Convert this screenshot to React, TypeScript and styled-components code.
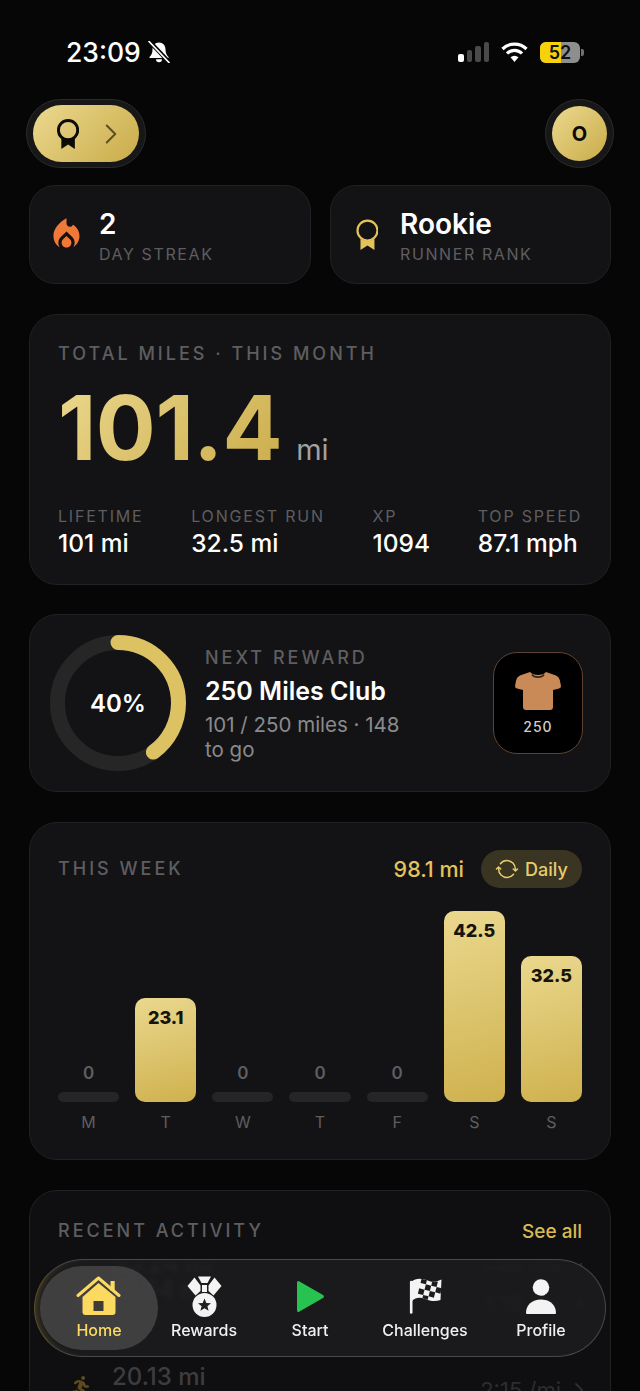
import { ReactNode } from 'react';
import styled, { createGlobalStyle } from 'styled-components';
import { FaRunning } from 'react-icons/fa';
import { IoSync } from 'react-icons/io5';
import { MdLocalFireDepartment } from 'react-icons/md';
import { LuChevronRight } from 'react-icons/lu';

const GOLD = 'linear-gradient(135deg, #ecd98f 0%, #c9ab49 100%)';
const BAR_GOLD = 'linear-gradient(165deg, #ead88e 0%, #cfb14e 100%)';

const week = [
  { day: 'M', miles: 0 },
  { day: 'T', miles: 23.1 },
  { day: 'W', miles: 0 },
  { day: 'T', miles: 0 },
  { day: 'F', miles: 0 },
  { day: 'S', miles: 42.5 },
  { day: 'S', miles: 32.5 },
];

const totals = [
  { label: 'LIFETIME', value: '101 mi' },
  { label: 'LONGEST RUN', value: '32.5 mi' },
  { label: 'XP', value: '1094' },
  { label: 'TOP SPEED', value: '87.1 mph' },
];

const activities = [
  { distance: '35.24 mi', pace: '1:48 /mi', top: true },
  { distance: '18.54 mi', pace: '1:15 /mi' },
  { distance: '20.13 mi', pace: '2:15 /mi' },
];

const Ribbon = ({ size, color, weight }: { size: number; color: string; weight: number }) => (
  <svg width={size * 0.74} height={size} viewBox="0 0 23 31">
    <path d="M4.500 20 Q11.500 24 18.500 20 V31 L11.500 26.500 L4.500 31 Z" fill={color} />
    <circle cx="11.500" cy="11.500" r="10" fill="none" stroke={color} strokeWidth={weight} />
  </svg>
);

const BellOff = () => (
  <svg width="22" height="22" viewBox="0 0 22 22">
    <path
      d="M11 1.500 C7 1.500 4.500 4.500 4.500 8.500 C4.500 12 3.500 14 1.500 16 V17 H20.500 V16 C18.500 14 17.500 12 17.500 8.500 C17.500 4.500 15 1.500 11 1.500 Z"
      fill="#fff"
    />
    <path d="M8 18.300 a3 3 0 0 0 6 0 Z" fill="#fff" />
    <path d="M1.500 0.500 L21 21" stroke="#060607" strokeWidth="4.200" />
    <path d="M1 0.500 L21 21.500" stroke="#fff" strokeWidth="1.700" strokeLinecap="round" />
  </svg>
);

const HomeIcon = () => (
  <svg width="46" height="40" viewBox="0 0 46 40">
    <path d="M34.500 5 h4.200 v10 h-4.200 Z" fill="#fcd961" />
    <path
      d="M6.500 21 L22.500 7 L39.500 21 V36 a3 3 0 0 1 -3 3 H9.500 a3 3 0 0 1 -3 -3 Z"
      fill="#fcd961"
    />
    <path d="M17.500 25 V35 H27.500 V25 Z" fill="#3f3d33" />
    <path
      d="M2 19.500 L22.500 2 L43 19.500"
      fill="none"
      stroke="#fcd961"
      strokeWidth="3"
      strokeLinecap="round"
      strokeLinejoin="round"
    />
  </svg>
);

const MedalIcon = () => (
  <svg width="35" height="41" viewBox="0 0 35 41">
    <path d="M11 0.500 H24 L20.500 7 H14.500 Z" fill="#f3f3f3" />
    <path d="M7.500 1.500 L0.500 10 L8.500 19.500 L13.500 15 L13.500 9.500 Z" fill="#f3f3f3" />
    <path d="M27.500 1.500 L34.500 10 L26.500 19.500 L21.500 15 L21.500 9.500 Z" fill="#f3f3f3" />
    <path d="M15 9 H20 V16 H15 Z" fill="#f3f3f3" />
    <circle cx="17.500" cy="29" r="12" fill="#f3f3f3" />
    <path
      d="M17.500 22.500 L19.300 26.900 L24 27.200 L20.400 30.200 L21.600 34.800 L17.500 32.300 L13.400 34.800 L14.600 30.200 L11 27.200 L15.700 26.900 Z"
      fill="#1f1f21"
    />
  </svg>
);

const PlayIcon = () => (
  <svg width="30" height="33" viewBox="0 0 30 33">
    <path d="M2 3 Q2 0 4.500 1.500 L28 15 Q30 16.500 28 18 L4.500 31.500 Q2 33 2 30 Z" fill="#27c24f" />
  </svg>
);

const FlagIcon = () => (
  <svg width="33" height="36" viewBox="0 0 33 36">
    <defs>
      <clipPath id="flagCloth">
        <path d="M2 4 C8 -1 14 1 20 3 C25 5 29 3 32.500 1.500 L31.500 22 C26 24 21 23 16 21 C11 19 7 19 3 23 Z" />
      </clipPath>
    </defs>
    <path d="M2 4 C8 -1 14 1 20 3 C25 5 29 3 32.500 1.500 L31.500 22 C26 24 21 23 16 21 C11 19 7 19 3 23 Z" fill="#f3f3f3" />
    <g clipPath="url(#flagCloth)">
      <g transform="rotate(14 17 12)" fill="#1c1c1e">
        <rect x="10" y="1" width="5.500" height="5.500" />
        <rect x="21" y="1" width="5.500" height="5.500" />
        <rect x="15.500" y="6.500" width="5.500" height="5.500" />
        <rect x="26.500" y="6.500" width="5.500" height="5.500" />
        <rect x="10" y="12" width="5.500" height="5.500" />
        <rect x="21" y="12" width="5.500" height="5.500" />
        <rect x="15.500" y="17.500" width="5.500" height="5.500" />
      </g>
    </g>
    <path d="M2.200 4 V34.500" stroke="#f3f3f3" strokeWidth="2.600" strokeLinecap="round" />
  </svg>
);

const ProfileIcon = () => (
  <svg width="32" height="36" viewBox="0 0 32 36">
    <circle cx="16" cy="9.500" r="8.300" fill="#f3f3f3" />
    <path d="M1 35 C1 27 7 21.500 16 21.500 C25 21.500 31 27 31 35 Q31 36 30 36 H2 Q1 36 1 35 Z" fill="#f3f3f3" />
  </svg>
);

const ShirtIcon = () => (
  <svg width="46" height="38" viewBox="0 0 46 38">
    <path
      d="M15 0 C18 4 28 4 31 0 L41 3.500 Q44 4.500 44.800 8 L46 14 Q46 16 44 16.500 L38 18 V35 Q38 38 35 38 H11 Q8 38 8 35 V18 L2 16.500 Q0 16 0 14 L1.200 8 Q2 4.500 5 3.500 Z"
      fill="#c98a58"
    />
    <path d="M17 2.500 C19 6 27 6 29 2.500" fill="none" stroke="#3a2415" strokeWidth="1.600" />
  </svg>
);

const WifiIcon = () => (
  <svg width="27" height="20" viewBox="0 0 27 20">
    <path d="M1.500 7 A17 17 0 0 1 25.500 7" fill="none" stroke="#fff" strokeWidth="3.200" />
    <path d="M6 11.500 A10.500 10.500 0 0 1 21 11.500" fill="none" stroke="#fff" strokeWidth="3.200" />
    <path d="M13.500 20 L9.500 15.200 A6 6 0 0 1 17.500 15.200 Z" fill="#fff" />
  </svg>
);

const ProgressRing = () => (
  <RingBox>
    <svg width="136" height="136" viewBox="0 0 136 136">
      <circle cx="68" cy="68" r="60.500" fill="none" stroke="#262627" strokeWidth="15" />
      <circle
        cx="68"
        cy="68"
        r="60.500"
        fill="none"
        stroke="#dcc263"
        strokeWidth="15"
        strokeLinecap="round"
        strokeDasharray={`${2 * Math.PI * 60.5 * 0.4} ${2 * Math.PI * 60.5}`}
        transform="rotate(-90 68 68)"
      />
    </svg>
    <RingValue>40%</RingValue>
  </RingBox>
);

const NavEntry = ({ icon, label, active }: { icon: ReactNode; label: string; active?: boolean }) => (
  <NavItem $active={active}>
    <NavIcon>{icon}</NavIcon>
    <NavLabel $active={active}>{label}</NavLabel>
  </NavItem>
);

export default function App() {
  return (
    <Screen>
      <GlobalStyle />
      <StatusBar>
        <Clock>
          23:09
          <BellOff />
        </Clock>
        <StatusIcons>
          <Signal>
            <SignalBar $h={8} $on />
            <SignalBar $h={12} />
            <SignalBar $h={16} />
            <SignalBar $h={20} />
          </Signal>
          <WifiIcon />
          <Battery>
            <BatteryShell>
              <BatteryFill />
              <BatteryText>52</BatteryText>
            </BatteryShell>
            <BatteryTip />
          </Battery>
        </StatusIcons>
      </StatusBar>

      <Header>
        <RingFrame>
          <RankPill>
            <Ribbon size={30} color="#0b0a05" weight={3} />
            <LuChevronRight size={34} strokeWidth={1.4} color="#5c4f22" />
          </RankPill>
        </RingFrame>
        <RingFrame>
          <Avatar>O</Avatar>
        </RingFrame>
      </Header>

      <Main>
        <StatRow>
          <StatCard>
            <StatIcon>
              <Flame />
            </StatIcon>
            <StatText>
              <StatValue>2</StatValue>
              <StatLabel>DAY STREAK</StatLabel>
            </StatText>
          </StatCard>
          <StatCard>
            <StatIcon>
              <Ribbon size={31} color="#e3c35a" weight={2.2} />
            </StatIcon>
            <StatText>
              <StatValue>Rookie</StatValue>
              <StatLabel>RUNNER RANK</StatLabel>
            </StatText>
          </StatCard>
        </StatRow>

        <TotalCard>
          <SectionTitle>TOTAL MILES · THIS MONTH</SectionTitle>
          <BigLine>
            <BigNumber>101.4</BigNumber>
            <BigUnit>mi</BigUnit>
          </BigLine>
          <TotalsRow>
            {totals.map((item) => (
              <div key={item.label}>
                <TotalLabel>{item.label}</TotalLabel>
                <TotalValue>{item.value}</TotalValue>
              </div>
            ))}
          </TotalsRow>
        </TotalCard>

        <RewardCard>
          <ProgressRing />
          <RewardText>
            <SectionTitle>NEXT REWARD</SectionTitle>
            <RewardName>250 Miles Club</RewardName>
            <RewardSub>101 / 250 miles · 148 to go</RewardSub>
          </RewardText>
          <RewardThumb>
            <ShirtIcon />
            <ThumbLabel>250</ThumbLabel>
          </RewardThumb>
        </RewardCard>

        <WeekCard>
          <WeekHead>
            <SectionTitle>THIS WEEK</SectionTitle>
            <WeekRight>
              <WeekTotal>98.1 mi</WeekTotal>
              <ModePill>
                <IoSync size={24} />
                Daily
              </ModePill>
            </WeekRight>
          </WeekHead>
          <Chart>
            {week.map((item, i) => (
              <ChartColumn key={i}>
                {item.miles === 0 ? (
                  <>
                    <ZeroValue>0</ZeroValue>
                    <EmptyBar />
                  </>
                ) : (
                  <Bar style={{ height: item.miles * 4.5 }}>{item.miles}</Bar>
                )}
                <DayLabel>{item.day}</DayLabel>
              </ChartColumn>
            ))}
          </Chart>
        </WeekCard>

        <RecentCard>
          <RecentHead>
            <SectionTitle>RECENT ACTIVITY</SectionTitle>
            <SeeAll>See all</SeeAll>
          </RecentHead>
          {activities.map((item) => (
            <ActivityRow key={item.distance} $top={item.top}>
              <ActivityIcon>{!item.top && <FaRunning size={21} color="#5f4a1e" />}</ActivityIcon>
              <ActivityDistance $top={item.top}>{item.distance}</ActivityDistance>
              <ActivityPace $top={item.top}>
                {item.pace}
                <PaceChevron size={24} />
              </ActivityPace>
            </ActivityRow>
          ))}
        </RecentCard>
      </Main>

      <BottomNav>
        <NavEntry active icon={<HomeIcon />} label="Home" />
        <NavEntry icon={<MedalIcon />} label="Rewards" />
        <NavEntry icon={<PlayIcon />} label="Start" />
        <NavEntry icon={<FlagIcon />} label="Challenges" />
        <NavEntry icon={<ProfileIcon />} label="Profile" />
      </BottomNav>
    </Screen>
  );
}

const GlobalStyle = createGlobalStyle`
  html, body {
    margin: 0;
    padding: 0;
    background: #060607;
  }
  * {
    box-sizing: border-box;
  }
`;

const Screen = styled.div`
  position: relative;
  width: 640px;
  height: 1391px;
  overflow: hidden;
  padding: 0 29px;
  background: #060607;
  color: #fff;
  font-family: Inter, 'Liberation Sans', sans-serif;
`;

const StatusBar = styled.div`
  height: 99px;
  display: flex;
  justify-content: space-between;
  align-items: flex-start;
  padding: 36px 27px 0 37px;
`;

const Clock = styled.div`
  display: flex;
  align-items: center;
  gap: 7px;
  font-size: 26.500px;
  line-height: 32px;
  font-weight: 500;
`;

const StatusIcons = styled.div`
  display: flex;
  align-items: center;
  gap: 12px;
  height: 32px;
`;

const Signal = styled.div`
  display: flex;
  align-items: flex-end;
  gap: 3px;
  height: 20px;
`;

const SignalBar = styled.div<{ $h: number; $on?: boolean }>`
  width: 5.500px;
  height: ${(p) => p.$h}px;
  border-radius: 2px;
  background: ${(p) => (p.$on ? '#fff' : '#4a4a4b')};
`;

const Battery = styled.div`
  display: flex;
  align-items: center;
  gap: 1px;
`;

const BatteryShell = styled.div`
  position: relative;
  width: 40px;
  height: 21px;
  border-radius: 6px;
  overflow: hidden;
  background: #8e8e8f;
  display: flex;
  align-items: center;
  justify-content: center;
`;

const BatteryFill = styled.div`
  position: absolute;
  left: 0;
  top: 0;
  bottom: 0;
  width: 52%;
  background: #f7d20a;
`;

const BatteryText = styled.span`
  position: relative;
  font-size: 18px;
  font-weight: 600;
  color: #111;
`;

const BatteryTip = styled.div`
  width: 3px;
  height: 7px;
  border-radius: 0 2px 2px 0;
  background: #6f6f70;
`;

const Header = styled.div`
  height: 69px;
  margin: 0 -3px 17px;
  display: flex;
  justify-content: space-between;
`;

const RingFrame = styled.div`
  padding: 6px;
  border-radius: 35px;
  background: #171718;
  border: 1px solid #2b2b2c;
  display: flex;
  align-items: center;
`;

const RankPill = styled.div`
  width: 106px;
  height: 57px;
  border-radius: 29px;
  background: ${GOLD};
  padding-left: 24px;
  display: flex;
  align-items: center;
  gap: 15px;
`;

const Avatar = styled.div`
  width: 55px;
  height: 55px;
  border-radius: 50%;
  background: ${GOLD};
  display: flex;
  align-items: center;
  justify-content: center;
  color: #0b0a05;
  font-size: 20px;
  font-weight: 700;
`;

const Main = styled.div`
  display: flex;
  flex-direction: column;
  gap: 30px;
`;

const StatRow = styled.div`
  display: grid;
  grid-template-columns: 282px 281px;
  justify-content: space-between;
`;

const Card = styled.div`
  background: #131315;
  border: 1px solid #212123;
  border-radius: 28px;
`;

const StatCard = styled(Card)`
  height: 99px;
  padding: 0 21px;
  display: flex;
  align-items: center;
  gap: 18px;
  border-radius: 26px;
`;

const StatIcon = styled.div`
  width: 30px;
  display: flex;
  justify-content: center;
  flex: none;
`;

const Flame = styled(MdLocalFireDepartment).attrs({ size: 39, color: '#f0793a' })`
  flex: none;
`;

const StatText = styled.div`
  display: flex;
  flex-direction: column;
  gap: 2px;
`;

const StatValue = styled.div`
  font-size: 28px;
  line-height: 36px;
  font-weight: 600;
`;

const StatLabel = styled.div`
  font-size: 16px;
  line-height: 20px;
  letter-spacing: 1.600px;
  color: #5e5e60;
`;

const SectionTitle = styled.div`
  font-size: 18px;
  line-height: 24px;
  letter-spacing: 3px;
  font-weight: 500;
  color: #5e5e60;
`;

const TotalCard = styled(Card)`
  height: 271px;
  padding: 27px 28px 0;
`;

const BigLine = styled.div`
  display: flex;
  align-items: baseline;
  gap: 14px;
  margin-top: 8px;
`;

const BigNumber = styled.div`
  font-size: 89px;
  line-height: 108px;
  font-weight: 700;
  letter-spacing: -0.500px;
  background: ${GOLD};
  -webkit-background-clip: text;
  background-clip: text;
  color: transparent;
`;

const BigUnit = styled.div`
  font-size: 29px;
  color: #a1a1a3;
`;

const TotalsRow = styled.div`
  display: flex;
  justify-content: space-between;
  margin-top: 24px;
`;

const TotalLabel = styled.div`
  font-size: 16px;
  line-height: 20px;
  letter-spacing: 1.800px;
  color: #5e5e60;
`;

const TotalValue = styled.div`
  font-size: 24.500px;
  line-height: 34px;
  font-weight: 500;
  white-space: nowrap;
`;

const RewardCard = styled(Card)`
  height: 178px;
  padding: 0 27px 0 20px;
  margin-top: -1px;
  display: flex;
  align-items: center;
`;

const RingBox = styled.div`
  position: relative;
  width: 136px;
  height: 136px;
  flex: none;
  margin-right: 19px;
`;

const RingValue = styled.div`
  position: absolute;
  inset: 0;
  display: flex;
  align-items: center;
  justify-content: center;
  font-size: 24px;
  font-weight: 600;
`;

const RewardText = styled.div`
  width: 205px;
  padding-top: 2px;
`;

const RewardName = styled.div`
  margin-top: 5px;
  font-size: 25px;
  line-height: 32px;
  font-weight: 600;
`;

const RewardSub = styled.div`
  margin-top: 5px;
  font-size: 20.500px;
  line-height: 25px;
  color: #8a8a8c;
`;

const RewardThumb = styled.div`
  width: 90px;
  height: 102px;
  margin-left: auto;
  flex: none;
  border-radius: 24px;
  border: 1.500px solid #5f4330;
  background: #000;
  display: flex;
  flex-direction: column;
  align-items: center;
  justify-content: center;
  gap: 8px;
`;

const ThumbLabel = styled.div`
  font-size: 14px;
  font-weight: 500;
  letter-spacing: 1px;
  color: #cfcfcf;
`;

const WeekCard = styled(Card)`
  height: 338px;
  padding: 27px 28px 0;
`;

const WeekHead = styled.div`
  display: flex;
  justify-content: space-between;
  align-items: center;
  height: 38px;
`;

const WeekRight = styled.div`
  display: flex;
  align-items: center;
  gap: 17px;
`;

const WeekTotal = styled.div`
  font-size: 21.500px;
  font-weight: 500;
  color: #e3c35a;
`;

const ModePill = styled.div`
  height: 38px;
  width: 101px;
  border-radius: 19px;
  background: #3a3423;
  color: #e6cd6e;
  display: flex;
  align-items: center;
  justify-content: center;
  gap: 6px;
  font-size: 18px;
  font-weight: 500;
`;

const Chart = styled.div`
  display: grid;
  grid-template-columns: repeat(7, 1fr);
  column-gap: 16px;
  height: 224px;
  margin-top: 22px;
`;

const ChartColumn = styled.div`
  display: flex;
  flex-direction: column;
  justify-content: flex-end;
  align-items: stretch;
`;

const ZeroValue = styled.div`
  font-size: 17px;
  line-height: 22px;
  font-weight: 600;
  text-align: center;
  color: #5e5e60;
  margin-bottom: 8px;
`;

const EmptyBar = styled.div`
  height: 10px;
  border-radius: 5px;
  background: #252527;
`;

const Bar = styled.div`
  border-radius: 10px;
  background: ${BAR_GOLD};
  padding-top: 9px;
  text-align: center;
  font-size: 18px;
  line-height: 22px;
  font-weight: 800;
  color: #17140a;
`;

const DayLabel = styled.div`
  height: 32px;
  padding-top: 9px;
  font-size: 16px;
  line-height: 22px;
  text-align: center;
  color: #5e5e60;
`;

const RecentCard = styled(Card)`
  height: 320px;
  padding: 27px 28px 0;
  background: #0f0f11;
`;

const RecentHead = styled.div`
  display: flex;
  justify-content: space-between;
  align-items: center;
  height: 26px;
`;

const SeeAll = styled.div`
  font-size: 19px;
  font-weight: 500;
  color: #d9bb55;
`;

const ActivityRow = styled.div<{ $top?: boolean }>`
  display: flex;
  align-items: flex-start;
  height: ${(p) => (p.$top ? 12 : 87)}px;
  margin-top: ${(p) => (p.$top ? 19 : 0)}px;
  overflow: ${(p) => (p.$top ? 'hidden' : 'visible')};
`;

const ActivityIcon = styled.div`
  width: 54px;
  flex: none;
  padding: 14px 0 0 12px;
`;

const ActivityDistance = styled.div<{ $top?: boolean }>`
  margin-top: ${(p) => (p.$top ? -14 : 0)}px;
  font-size: 24px;
  line-height: 30px;
  font-weight: 500;
  color: #3d3d3f;
`;

const ActivityPace = styled.div<{ $top?: boolean }>`
  margin: ${(p) => (p.$top ? -14 : 13)}px 0 0 auto;
  display: flex;
  align-items: center;
  gap: 6px;
  font-size: 22px;
  line-height: 30px;
  color: #2d2d2f;
`;

const PaceChevron = styled(LuChevronRight)`
  margin-right: -9px;
`;

const BottomNav = styled.nav`
  position: absolute;
  left: 34px;
  top: 1259px;
  width: 572px;
  height: 98px;
  padding: 6px 5px;
  border-radius: 49px;
  display: grid;
  grid-template-columns: 118px 92px 120px 110px 122px;
  background: rgba(29, 29, 31, 0.8);
  border: 1px solid #48484a;
  border-left-color: #5a5230;
  box-shadow: inset 7px 0 8px -6px rgba(190, 160, 60, 0.35);
  backdrop-filter: blur(2.500px);
`;

const NavItem = styled.div<{ $active?: boolean }>`
  display: flex;
  flex-direction: column;
  align-items: center;
  justify-content: flex-end;
  padding-bottom: 10px;
  border-radius: 42px;
  background: ${(p) => (p.$active ? 'rgba(78, 78, 78, 0.75)' : 'transparent')};
`;

const NavIcon = styled.div`
  height: 44px;
  display: flex;
  align-items: center;
  justify-content: center;
  margin-bottom: 2px;
`;

const NavLabel = styled.div<{ $active?: boolean }>`
  font-size: 16px;
  line-height: 20px;
  font-weight: 500;
  white-space: nowrap;
  color: ${(p) => (p.$active ? '#fcd961' : '#f0f0f0')};
`;
